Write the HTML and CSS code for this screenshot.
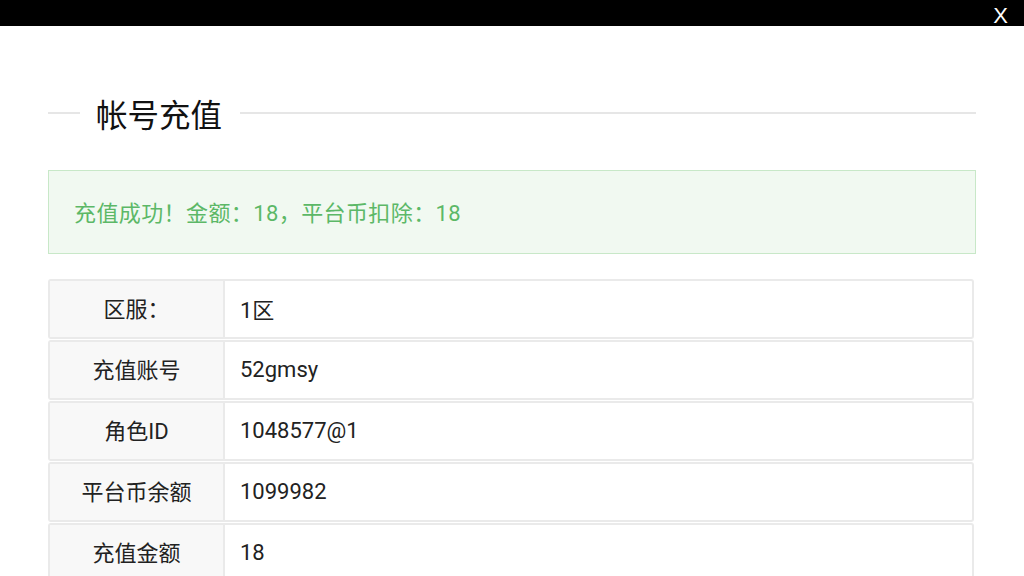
FILE: index.html
```html
<!DOCTYPE html>
<html lang="zh-CN">
<head>
<meta charset="utf-8">
<title>帐号充值</title>
<link rel="stylesheet" href="styles.css">
</head>
<body>
<div class="topbar"><span class="close">X</span></div>
<main class="page">
  <div class="heading">
    <span class="line short"></span>
    <h1 class="title">帐号充值</h1>
    <span class="line long"></span>
  </div>
  <div class="alert">充值成功！金额：18，平台币扣除：18</div>
  <div class="table">
    <div class="row"><div class="label">区服：</div><div class="value">1区</div></div>
    <div class="row"><div class="label">充值账号</div><div class="value">52gmsy</div></div>
    <div class="row"><div class="label">角色ID</div><div class="value">1048577@1</div></div>
    <div class="row"><div class="label">平台币余额</div><div class="value">1099982</div></div>
    <div class="row"><div class="label">充值金额</div><div class="value">18</div></div>
  </div>
</main>
</body>
</html>
```

FILE: styles.css
```css
html, body {
  margin: 0;
  padding: 0;
  background: #ffffff;
  height: 576px;
  overflow: hidden;
  font-family: Roboto, "Noto Sans CJK SC", sans-serif;
  color: #222222;
}

.topbar {
  box-sizing: border-box;
  height: 26px;
  padding-top: 6px;
  background: #000000;
  display: flex;
  justify-content: flex-end;
  align-items: flex-start;
}

.close {
  color: #ffffff;
  font-family: "Liberation Sans", sans-serif;
  font-size: 22px;
  line-height: 20px;
  height: 20px;
  padding-right: 16px;
}

.page {
  padding: 67px 48px 0 48px;
}

.heading {
  display: flex;
  align-items: center;
  height: 40px;
}

.line {
  height: 2px;
  background: #e6e6e6;
}

.line.short {
  width: 32px;
}

.line.long {
  flex: 1;
}

.title {
  margin: 0 18px 0 16px;
  font-size: 31.5px;
  font-weight: normal;
  line-height: 40px;
  color: #111111;
  font-family: "Noto Sans CJK SC", sans-serif;
}

.alert {
  margin-top: 37px;
  box-sizing: border-box;
  height: 84px;
  border: 1px solid #c8e8c8;
  background: #f1f9f1;
  color: #5cb867;
  font-size: 22px;
  letter-spacing: 0.4px;
  display: flex;
  align-items: center;
  padding-left: 25px;
  padding-bottom: 2px;
}

.table {
  margin-top: 25px;
  margin-right: 2px;
  display: flex;
  flex-direction: column;
  gap: 1px;
}

.row {
  display: flex;
  height: 56px;
  border: 2px solid #eaeaea;
  border-radius: 3px;
  font-size: 22px;
}

.label {
  width: 173px;
  background: #f8f8f8;
  border-right: 2px solid #eaeaea;
  display: flex;
  align-items: center;
  justify-content: center;
  padding-bottom: 4px;
}

.value {
  flex: 1;
  display: flex;
  align-items: center;
  padding-left: 15px;
  padding-bottom: 2px;
}
```
